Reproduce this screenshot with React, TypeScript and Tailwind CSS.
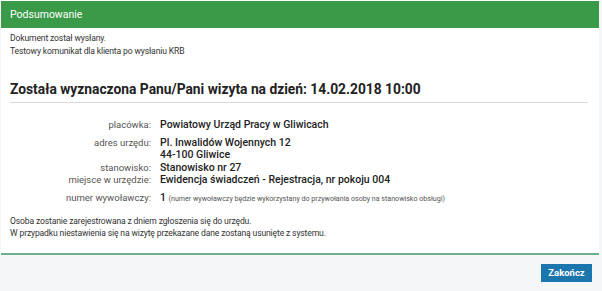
const font = { fontFamily: 'Roboto, "Open Sans", sans-serif' };

export default function App() {
  return (
    <div className="w-[602px] h-[291px] bg-[#f5f6f8] text-[#333]" style={font}>
      <div className="ml-px mr-[3px] pt-px bg-white">
        {/* Header */}
        <div className="h-[27px] bg-[#3b9a47] px-[9px] flex items-center">
          <span className="text-white text-[10.5px]">Podsumowanie</span>
        </div>

        {/* Body */}
        <div className="px-[9px] pt-[4px] pb-[14px] border-b-2 border-[#6bb08a]">
          <p className="text-[8.6px] leading-[13px] tracking-[-0.15px]">Dokument został wysłany.</p>
          <p className="text-[8.6px] leading-[13px] tracking-[-0.15px]">Testowy komunikat dla klienta po wysłaniu KRB</p>

          <h1 className="mt-[20px] text-[13.8px] font-bold leading-[22px] text-[#222]">
            Została wyznaczona Panu/Pani wizyta na dzień: 14.02.2018 10:00
          </h1>
          <div className="mt-[2px] mr-[2px] border-t border-[#d9d9d9]" />

          <div className="mt-[16px] grid grid-cols-[141px_1fr] gap-x-[9px] leading-[12.5px]">
            <span className="text-right text-[#555] text-[9.5px]">placówka:</span>
            <span className="font-medium text-[#222] text-[10.5px]">Powiatowy Urząd Pracy w Gliwicach</span>

            <span className="text-right text-[#555] text-[9.5px] mt-[5px]">adres urzędu:</span>
            <span className="font-medium text-[#222] text-[10.5px] mt-[5px]">
              Pl. Inwalidów Wojennych 12
              <br />
              44-100 Gliwice
            </span>

            <span className="text-right text-[#555] text-[9.5px]">stanowisko:</span>
            <span className="font-medium text-[#222] text-[10.5px]">Stanowisko nr 27</span>

            <span className="text-right text-[#555] text-[9.5px]">miejsce w urzędzie:</span>
            <span className="font-medium text-[#222] text-[10.5px]">Ewidencja świadczeń - Rejestracja, nr pokoju 004</span>

            <span className="text-right text-[#555] text-[9.5px] mt-[5px]">numer wywoławczy:</span>
            <span className="mt-[5px] text-[#222] text-[10.5px]">
              <span className="font-medium">1</span>{' '}
              <span className="text-[7.1px] text-[#555]">(numer wywoławczy będzie wykorzystany do przywołania osoby na stanowisko obsługi)</span>
            </span>
          </div>

          <p className="mt-[10px] text-[8.6px] leading-[12px] tracking-[-0.15px]">Osoba zostanie zarejestrowana z dniem zgłoszenia się do urzędu.</p>
          <p className="text-[8.6px] leading-[12px] tracking-[-0.15px]">W przypadku niestawienia się na wizytę przekazane dane zostaną usunięte z systemu.</p>
        </div>
      </div>

      {/* Footer */}
      <div className="flex justify-end pr-[10px] pt-[9px]">
        <button className="h-[18px] w-[51px] bg-[#1b76ae] text-white text-[9.5px] font-bold">Zakończ</button>
      </div>
    </div>
  );
}
